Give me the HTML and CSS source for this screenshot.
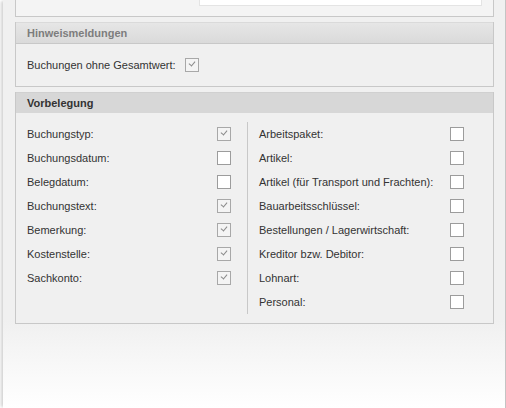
FILE: index.html
```html
<html>
  <head>
    <link rel="stylesheet" href="styles.css">
  </head>
  <body>
    <div class="frame">
      <div class="group prev">
        <div class="prev-box"></div>
      </div>

      <div class="group">
        <div class="group-head light">Hinweismeldungen</div>
        <div class="group-body single">
          <div class="row">
            <label>Buchungen ohne Gesamtwert:</label>
            <span class="cb on"></span>
          </div>
        </div>
      </div>

      <div class="group">
        <div class="group-head">Vorbelegung</div>
        <div class="group-body cols">
          <div class="col left">
            <div class="row"><label>Buchungstyp:</label><span class="cb on"></span></div>
            <div class="row"><label>Buchungsdatum:</label><span class="cb"></span></div>
            <div class="row"><label>Belegdatum:</label><span class="cb"></span></div>
            <div class="row"><label>Buchungstext:</label><span class="cb on"></span></div>
            <div class="row"><label>Bemerkung:</label><span class="cb on"></span></div>
            <div class="row"><label>Kostenstelle:</label><span class="cb on"></span></div>
            <div class="row"><label>Sachkonto:</label><span class="cb on"></span></div>
          </div>
          <div class="col right">
            <div class="row"><label>Arbeitspaket:</label><span class="cb"></span></div>
            <div class="row"><label>Artikel:</label><span class="cb"></span></div>
            <div class="row"><label>Artikel (für Transport und Frachten):</label><span class="cb"></span></div>
            <div class="row"><label>Bauarbeitsschlüssel:</label><span class="cb"></span></div>
            <div class="row"><label>Bestellungen / Lagerwirtschaft:</label><span class="cb"></span></div>
            <div class="row"><label>Kreditor bzw. Debitor:</label><span class="cb"></span></div>
            <div class="row"><label>Lohnart:</label><span class="cb"></span></div>
            <div class="row"><label>Personal:</label><span class="cb"></span></div>
          </div>
        </div>
      </div>
    </div>
  </body>
</html>
```

FILE: styles.css
```css
html, body { margin:0;padding:0;height:100%; }
body { font-family:"Liberation Sans", Arial, sans-serif;font-size:11px;color:#333;background:#fff; }
.frame { box-sizing:border-box;height:408px;margin-left:3px;width:503px;padding:0 11px 0 12px;border-right:1px solid #c4c4c4;box-shadow:-3px 0 3px -1px rgba(0,0,0,0.18);background:linear-gradient(to bottom, #f0f0f0 0, #f0f0f0 320px, #ffffff 408px); }
.group { border:1px solid #c8c8c8;border-top:none;margin-bottom:5px; }
.prev { height:17px;box-sizing:border-box;background:#f4f4f4;padding-left:183px;padding-right:11px; }
.prev-box { height:5px;background:#fff;border:1px solid #e4e4e4;border-top:none; }
.group-head { height:20px;line-height:20px;padding-left:11px;font-weight:bold;color:#333;background:#d7d7d7;border-top:1px solid #d0d0d0; }
.group-head.light { color:#7d7d7d;background:linear-gradient(to bottom, #e6e6e6, #dadada);border-top:1px solid #dadada;border-bottom:1px solid #c8c8c8;height:20px;line-height:20px; }
.group-body { background:#f0f0f0; }
.group-body.single { padding:9px 11px 9px 11px; }
.group-body.single .row label { width:158px;flex:none; }
.cols { display:flex;padding:9px 0 9px 0; }
.col { display:flex;flex-direction:column; }
.col.left { box-sizing:border-box;width:232px;padding:0 16px 0 11px;border-right:1px solid #c8c8c8; }
.col.right { flex:1;padding:0 29px 0 11px; }
.row { display:flex;align-items:center;height:24px; }
.row label { flex:1;white-space:nowrap; }
.cb { display:inline-block;box-sizing:border-box;width:14px;height:14px;border:1px solid #9c9c9c;background:#fff;position:relative; }
.cb.on { background:#f4f4f4;border-color:#a8a8a8; }
.cb.on::after { content:"";position:absolute;left:3px;top:2px;width:5px;height:3px;border-left:1px solid #8a8a8a;border-bottom:1px solid #8a8a8a;transform:rotate(-50deg);transform-origin:center; }
```
